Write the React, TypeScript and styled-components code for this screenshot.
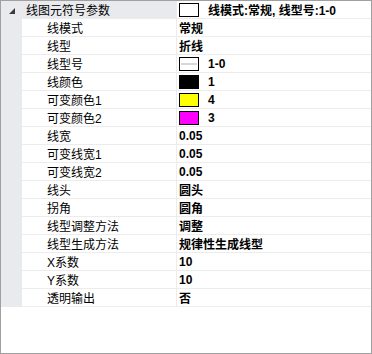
import styled, { createGlobalStyle } from "styled-components";

const GlobalStyle = createGlobalStyle`
  body {
    margin: 0;
    background: #ffffff;
  }
`;

const Panel = styled.div`
  box-sizing: border-box;
  width: 372px;
  height: 354px;
  border: 1px solid #a0a0a0;
  background: #ffffff;
  font-family: "Liberation Sans", "Noto Sans CJK SC", sans-serif;
  font-size: 12px;
  color: #000000;
`;

const Row = styled.div`
  display: grid;
  grid-template-columns: 21px 155px 1fr;
  height: 18px;
`;

const Gutter = styled.div<{ $header?: boolean }>`
  background: #e9eaee;
  display: flex;
  align-items: center;
  justify-content: center;
`;

const LabelCell = styled.div<{ $header?: boolean }>`
  display: flex;
  align-items: center;
  box-sizing: border-box;
  padding-left: ${(p) => (p.$header ? "4px" : "25px")};
  background: ${(p) => (p.$header ? "#e9eaee" : "#ffffff")};
  border-bottom: 1px solid #ececec;
  border-right: 1px solid #ececec;
  white-space: nowrap;
`;

const ValueCell = styled.div`
  display: flex;
  align-items: center;
  gap: 9px;
  box-sizing: border-box;
  padding-left: 2px;
  border-bottom: 1px solid #ececec;
  font-weight: bold;
  white-space: nowrap;
`;

const Swatch = styled.span<{ $color: string }>`
  box-sizing: border-box;
  width: 20px;
  height: 14px;
  border: 1px solid #000000;
  background: ${(p) => p.$color};
  display: flex;
  align-items: center;
  justify-content: center;
`;

const LineSample = styled.span`
  width: 16px;
  height: 2px;
  background: #d8d8d8;
`;

const Expander = () => (
  <svg width="6" height="6" viewBox="0 0 6 6" style={{ marginLeft: 0, marginTop: 1 }}>
    <polygon points="6,0 6,6 0,6" fill="#3c3c3c" />
  </svg>
);

type Item = { label: string; value: string; swatch?: string; line?: boolean };

const items: Item[] = [
  { label: "线模式", value: "常规" },
  { label: "线型", value: "折线" },
  { label: "线型号", value: "1-0", swatch: "#ffffff", line: true },
  { label: "线颜色", value: "1", swatch: "#000000" },
  { label: "可变颜色1", value: "4", swatch: "#ffff00" },
  { label: "可变颜色2", value: "3", swatch: "#ff00ff" },
  { label: "线宽", value: "0.05" },
  { label: "可变线宽1", value: "0.05" },
  { label: "可变线宽2", value: "0.05" },
  { label: "线头", value: "圆头" },
  { label: "拐角", value: "圆角" },
  { label: "线型调整方法", value: "调整" },
  { label: "线型生成方法", value: "规律性生成线型" },
  { label: "X系数", value: "10" },
  { label: "Y系数", value: "10" },
  { label: "透明输出", value: "否" },
];

export default function App() {
  return (
    <>
      <GlobalStyle />
      <Panel>
        <Row>
          <Gutter>
            <Expander />
          </Gutter>
          <LabelCell $header>线图元符号参数</LabelCell>
          <ValueCell>
            <Swatch $color="#ffffff" />
            <span>线模式:常规, 线型号:1-0</span>
          </ValueCell>
        </Row>
        {items.map((it) => (
          <Row key={it.label}>
            <Gutter />
            <LabelCell>{it.label}</LabelCell>
            <ValueCell>
              {it.swatch && (
                <Swatch $color={it.swatch}>{it.line && <LineSample />}</Swatch>
              )}
              <span>{it.value}</span>
            </ValueCell>
          </Row>
        ))}
      </Panel>
    </>
  );
}
